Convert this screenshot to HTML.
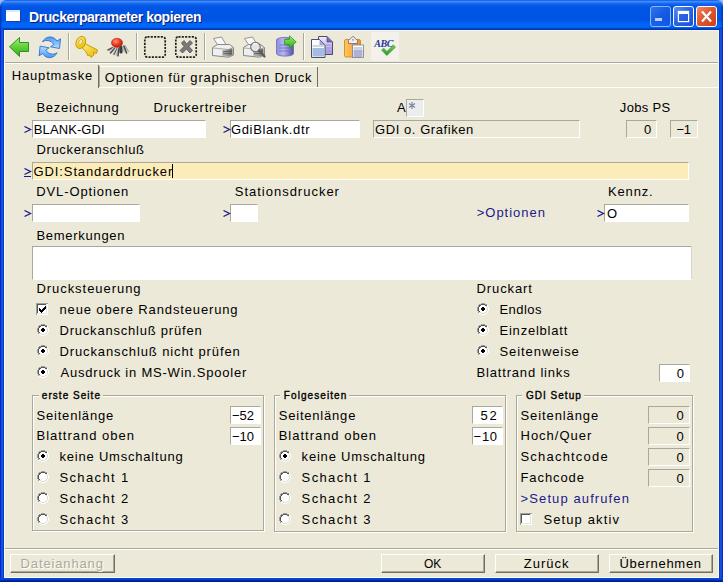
<!DOCTYPE html>
<html><head><meta charset="utf-8"><style>
html,body{margin:0;padding:0;width:723px;height:582px;overflow:hidden;background:#9db9eb}
body>div,body>svg{position:absolute}
div{position:absolute}
.t{white-space:pre;font-family:"Liberation Sans",sans-serif}
#title{left:0;top:0;width:723px;height:30px;border-radius:6px 6px 0 0;
background:linear-gradient(to bottom,#0a3dcc 0px,#3c8dff 1px,#3d8bff 2px,#1a6ff5 3px,#0a5ce8 5px,#0055e5 8px,#0054e3 20px,#0062f3 23px,#0067f9 27px,#0058e8 28px,#0036b0 29px,#0036b0 30px)}
#bl{left:0;top:29px;width:4px;height:553px;background:linear-gradient(to right,#0019cf 0,#0a35d8 1px,#1c66f0 2px,#0a3eb8 3px,#0a3eb8 4px)}
#br{left:719px;top:29px;width:4px;height:553px;background:linear-gradient(to left,#0019cf 0,#0a35d8 1px,#1c66f0 2px,#0a3eb8 3px,#0a3eb8 4px)}
#bb{left:0;top:578px;width:723px;height:4px;background:linear-gradient(to bottom,#0848d8 0,#0848d8 1px,#0040d0 1px,#0040d0 2px,#002cac 2px,#002cac 3px,#001a8c 3px)}
#client{left:4px;top:30px;width:715px;height:548px;background:#ECE9D8;box-sizing:border-box;border:1px solid #f4f6fb;border-bottom-color:#fff}
.tb{width:21px;height:21px;box-sizing:border-box;border:1px solid #fff;border-radius:3px;background:linear-gradient(135deg,#5d8ff5 0%,#2a63e6 45%,#1c50d8 100%)}
.tbx{background:linear-gradient(135deg,#f08a6a 0%,#e0582e 45%,#c8421c 100%)}
</style></head><body>
<div id="title"></div><div id="bl"></div><div id="br"></div><div id="bb"></div><div style="left:0px;top:6px;width:2px;height:23px;background:linear-gradient(to right,rgba(0,20,160,.55),rgba(0,20,160,.15))"></div><div style="left:721px;top:6px;width:2px;height:23px;background:linear-gradient(to left,rgba(0,20,160,.55),rgba(0,20,160,.15))"></div><div id="client"></div><div style="left:6px;top:10px;width:14px;height:11px;background:#fff;box-shadow:1px 1px 0 #1a3fa8"></div><div style="left:6px;top:10px;width:14px;height:2px;background:#dfe8fb"></div><div class="tb" style="left:650px;top:6px;opacity:.55"></div><div style="left:655px;top:18px;width:7px;height:3px;background:#bcd0f7"></div><div class="tb" style="left:673px;top:6px"></div><div style="left:678px;top:11px;width:11px;height:11px;border:1px solid #fff;border-top-width:3px;box-sizing:border-box;box-shadow:0 0 0 0.4px rgba(255,255,255,.5)"></div><div class="tb tbx" style="left:696px;top:6px"></div><svg style="position:absolute;left:696px;top:6px" width="21" height="21"><path d="M6 5.5 L15 15.5 M15 5.5 L6 15.5" stroke="#fff" stroke-width="2.2"/></svg><div style="left:5px;top:62px;width:713px;height:1px;background:#aca899"></div><div style="left:5px;top:63px;width:713px;height:1px;background:#fff"></div><div style="left:68px;top:33px;width:1px;height:27px;background:#aca899"></div><div style="left:69px;top:33px;width:1px;height:27px;background:#fff"></div><div style="left:136px;top:33px;width:1px;height:27px;background:#aca899"></div><div style="left:137px;top:33px;width:1px;height:27px;background:#fff"></div><div style="left:204px;top:33px;width:1px;height:27px;background:#aca899"></div><div style="left:205px;top:33px;width:1px;height:27px;background:#fff"></div><div style="left:303px;top:33px;width:1px;height:27px;background:#aca899"></div><div style="left:304px;top:33px;width:1px;height:27px;background:#fff"></div><div style="left:371px;top:32px;width:28px;height:29px;background:#f3f1e9"></div><svg style="position:absolute;left:0;top:0" width="410" height="62" viewBox="0 0 410 62">
<defs>
<linearGradient id="gg" x1="0" y1="0" x2="0" y2="1"><stop offset="0" stop-color="#a8f07a"/><stop offset="0.5" stop-color="#5fd03a"/><stop offset="1" stop-color="#38a820"/></linearGradient>
<linearGradient id="bg1" x1="0" y1="0" x2="1" y2="1"><stop offset="0" stop-color="#b8dcff"/><stop offset="1" stop-color="#2a7ee0"/></linearGradient>
<linearGradient id="bg2" x1="0" y1="0" x2="0" y2="1"><stop offset="0" stop-color="#4a94ec"/><stop offset="0.6" stop-color="#8cc4fa"/><stop offset="1" stop-color="#b8dcff"/></linearGradient>
<linearGradient id="kg" x1="0" y1="0" x2="1" y2="1"><stop offset="0" stop-color="#fff27a"/><stop offset="1" stop-color="#e8b400"/></linearGradient>
<radialGradient id="rb" cx="0.4" cy="0.35" r="0.7"><stop offset="0" stop-color="#ff9a7a"/><stop offset="0.5" stop-color="#f03a20"/><stop offset="1" stop-color="#b01808"/></radialGradient>
<linearGradient id="pg" x1="0" y1="0" x2="1" y2="1"><stop offset="0" stop-color="#ffffff"/><stop offset="1" stop-color="#9a9a9a"/></linearGradient>
<linearGradient id="dbg" x1="0" y1="0" x2="1" y2="0"><stop offset="0" stop-color="#8c8cd8"/><stop offset="0.4" stop-color="#b8b8f0"/><stop offset="1" stop-color="#5050a8"/></linearGradient>
<linearGradient id="psh" x1="0" y1="0" x2="1" y2="0"><stop offset="0" stop-color="#c8c8c8"/><stop offset="1" stop-color="#6a6a6a"/></linearGradient>
<linearGradient id="cpg" x1="0" y1="0" x2="0" y2="1"><stop offset="0" stop-color="#f0eefa"/><stop offset="0.5" stop-color="#c8bcec"/><stop offset="1" stop-color="#a898dc"/></linearGradient>
<linearGradient id="ckg" x1="0" y1="0" x2="0" y2="1"><stop offset="0" stop-color="#70d050"/><stop offset="1" stop-color="#2a9a20"/></linearGradient>
<linearGradient id="og" x1="0" y1="0" x2="1" y2="0"><stop offset="0" stop-color="#ffc860"/><stop offset="1" stop-color="#f09020"/></linearGradient>
</defs>
<!-- green back arrow -->
<path d="M9.5 46.8 L19.5 37.5 L19.5 42.5 L28.5 42.5 L28.5 51.5 L19.5 51.5 L19.5 56.5 Z" fill="url(#gg)" stroke="#2e8f22" stroke-width="1" stroke-linejoin="round"/>
<!-- refresh -->
<g>
<path d="M42.5 41.8 C45 36.5 53 34.5 57 41 L60.5 38.8 L59.5 48.5 L50.5 46.8 L53.8 44.5 C51 40 46 39.5 42.5 41.8 Z" fill="url(#bg2)" stroke="#2f70d6" stroke-width="0.9" stroke-linejoin="round"/>
</g>
<g transform="rotate(180 49.8 47.3)">
<path d="M42.5 41.8 C45 36.5 53 34.5 57 41 L60.5 38.8 L59.5 48.5 L50.5 46.8 L53.8 44.5 C51 40 46 39.5 42.5 41.8 Z" fill="url(#bg2)" stroke="#2f70d6" stroke-width="0.9" stroke-linejoin="round"/>
</g>
<!-- key -->
<g stroke="#c89400" stroke-width="0.9" stroke-linejoin="round">
<path d="M83 42.5 L97.5 50 L96.5 53.5 L93.5 52.2 L94 55 L91 57.5 L89.5 55 L88 56 L86 51.5 L84.5 50.5 L82 47.5 Z" fill="url(#kg)"/>
<ellipse cx="80.8" cy="42.5" rx="4.6" ry="6.2" transform="rotate(25 80.8 42.5)" fill="url(#kg)"/>
</g>
<ellipse cx="80.6" cy="42" rx="1.6" ry="3" transform="rotate(25 80.6 42)" fill="#f4ecc8" stroke="#d0a000" stroke-width="0.7"/>
<!-- red ball spider -->
<g stroke-linecap="round">
<path d="M108 50 L113 47.5" stroke="#555" stroke-width="1.6"/>
<path d="M110 52 L114 47.5" stroke="#c8c8c8" stroke-width="1.6"/>
<path d="M110.5 53 L115 48" stroke="#4a4a4a" stroke-width="1.4"/>
<path d="M113 54 L116 48" stroke="#d0d0d0" stroke-width="1.6"/>
<path d="M114 54.5 L117 48.5" stroke="#5a5a5a" stroke-width="1.2"/>
<path d="M116.5 55.5 L117.8 48.5" stroke="#bdbdbd" stroke-width="1.6"/>
<path d="M118 55.8 L119 48" stroke="#444" stroke-width="1.5"/>
<path d="M121 52 L121 47" stroke="#3c3c48" stroke-width="3.2"/>
<path d="M124 51.5 L123 46" stroke="#b8c0b8" stroke-width="1.5"/>
<path d="M126.5 53 L124 46" stroke="#4a4a4a" stroke-width="1.6"/>
<path d="M128.5 51.5 L125 45.5" stroke="#a8b0a8" stroke-width="1.4"/>
</g>
<ellipse cx="117" cy="42.8" rx="5.6" ry="4.6" fill="url(#rb)" stroke="#b02010" stroke-width="0.5"/>
<!-- dashed boxes -->
<rect x="144.8" y="36.8" width="20.4" height="20.3" rx="2.6" fill="none" stroke="#1e1e1e" stroke-width="1.7" stroke-dasharray="2.1 1.25"/>
<rect x="175.8" y="36.8" width="20.4" height="20.3" rx="2.6" fill="none" stroke="#1e1e1e" stroke-width="1.7" stroke-dasharray="2.1 1.25"/>
<path d="M181.5 43 L184 40.5 L186.5 44 L190 40.5 L192.5 43 L189 46.5 L192.5 50.5 L190 53 L186.5 49 L182.5 53 L180 50.5 L184 46.5 Z" fill="#7a7a7a" stroke="#505050" stroke-width="0.8" stroke-linejoin="round"/>
<!-- printer -->
<g>
<path d="M213.5 38.5 L221.5 37 L226 44.5 L218.5 46 Z" fill="#f8f8f8" stroke="#8a8a8a" stroke-width="0.9" stroke-linejoin="round"/>
<path d="M212.5 47.5 L217.5 44.5 L229.5 44.5 L233.5 47.5 L233.5 55 L228.5 57.2 L212.5 55.5 Z" fill="#efefef" stroke="#7a7a7a" stroke-width="0.9" stroke-linejoin="round"/>
<path d="M213 48 L228.5 49.5 L233 47.5" fill="none" stroke="#9a9a9a" stroke-width="0.8"/>
<path d="M222 50 L232.5 48.5 L232.5 55 L228.5 56.5 L222 56 Z" fill="url(#psh)"/>
<path d="M223 51.8 L232 51 M223 53.8 L232 53.2" stroke="#4a4a4a" stroke-width="0.8"/>
</g>
<!-- printer preview -->
<g transform="translate(31 0)">
<path d="M213.5 38.5 L221.5 37 L226 44.5 L218.5 46 Z" fill="#f8f8f8" stroke="#8a8a8a" stroke-width="0.9" stroke-linejoin="round"/>
<path d="M212.5 47.5 L217.5 44.5 L229.5 44.5 L233.5 47.5 L233.5 55 L228.5 57.2 L212.5 55.5 Z" fill="#efefef" stroke="#7a7a7a" stroke-width="0.9" stroke-linejoin="round"/>
<path d="M213 48 L228.5 49.5 L233 47.5" fill="none" stroke="#9a9a9a" stroke-width="0.8"/>
<path d="M222 50 L232.5 48.5 L232.5 55 L228.5 56.5 L222 56 Z" fill="url(#psh)"/>
<path d="M223 51.8 L232 51 M223 53.8 L232 53.2" stroke="#4a4a4a" stroke-width="0.8"/>
</g>
<circle cx="255.5" cy="47" r="4.8" fill="#e4e4e4" stroke="#6a6a6a" stroke-width="1.1"/>
<path d="M253 44.5 A3 3 0 0 1 257 44" stroke="#fff" stroke-width="1" fill="none"/>
<path d="M259 50.5 L264.5 56.5" stroke="#5a5a5a" stroke-width="2.3" stroke-linecap="round"/>
<!-- database w/ arrow -->
<path d="M276.5 40 C276.5 36.5 293.5 36.5 293.5 40 L293.5 53.5 C293.5 57 276.5 57 276.5 53.5 Z" fill="url(#dbg)" stroke="#6a6ab8" stroke-width="0.8"/>
<path d="M279 45 L290 45 M279 48 L290 48 M279 51 L290 51" stroke="#7070c0" stroke-width="0.8"/>
<path d="M284.5 39.5 L289.5 39.5 L289.5 35.8 L296.2 42 L289.5 48.2 L289.5 44.5 L284.5 44.5 Z" fill="url(#gg)" stroke="#2e9a20" stroke-width="0.8" stroke-linejoin="round"/>
<!-- copy -->
<path d="M318.5 36.5 L327 36.5 L332.5 42 L332.5 54.5 L318.5 54.5 Z" fill="url(#cpg)" stroke="#3c3c5a" stroke-width="0.9" stroke-linejoin="round"/>
<path d="M327 36.5 L327 42 L332.5 42" fill="#7a68c0" stroke="#3c3c5a" stroke-width="0.6"/>
<path d="M326 45 L331.5 45 M326 48 L331.5 48 M326 51 L331.5 51" stroke="#9a8ad8" stroke-width="0.9"/>
<path d="M311.5 39.5 L319.5 39.5 L325 45 L325 57.5 L311.5 57.5 Z" fill="#fafcff" stroke="#3c3c5a" stroke-width="0.9" stroke-linejoin="round"/>
<path d="M319.5 39.8 L319.5 45 L324.8 45 Z" fill="#9aaad8"/>
<rect x="312.5" y="45.5" width="12" height="1" fill="#a8b0c0"/>
<rect x="312.5" y="48" width="12" height="8.5" fill="#a4bce0"/>
<!-- paste -->
<rect x="344.5" y="39.5" width="16" height="17.5" rx="1.5" fill="url(#og)" stroke="#d08010" stroke-width="0.8"/>
<path d="M348.5 43.5 L348.5 40.5 L353 36.3 L357.5 40.5 L357.5 43.5 Z" fill="#f2eef0" stroke="#6a6a6a" stroke-width="0.8" stroke-linejoin="round"/><circle cx="353" cy="39.8" r="0.9" fill="#9a8a9a"/>
<rect x="352.5" y="45" width="11" height="12.5" fill="#ffffff" stroke="#7a7a8a" stroke-width="0.8"/>
<rect x="353.5" y="47.5" width="9" height="1" fill="#90a8c0"/><rect x="353.5" y="49.5" width="9" height="7.5" fill="#aeb0d4"/>
<!-- ABC check -->
<text x="374.2" y="47.3" font-family="Liberation Serif" font-style="italic" font-weight="bold" font-size="10" fill="#233a9a" letter-spacing="-0.4">ABC</text>
<path d="M381.5 50 L383.8 48.2 L386.8 51.5 L393.5 45 L395.5 47.2 L386.8 55.5 Z" fill="url(#ckg)" stroke="#2a8a20" stroke-width="0.5" stroke-linejoin="round"/>
</svg>
<div style="left:4px;top:63px;width:95px;height:26px;background:#ECE9D8;border-left:1px solid #fff;border-top:1px solid #fff;box-sizing:border-box"></div><div style="left:98px;top:65px;width:1px;height:23px;background:#716f64"></div><div style="left:99px;top:66px;width:1px;height:22px;background:#aca899"></div><div style="left:100px;top:66px;width:218px;height:22px;background:#ECE9D8;border-top:1px solid #fff;box-sizing:border-box"></div><div style="left:317px;top:67px;width:1px;height:20px;background:#716f64"></div><div style="left:99px;top:87px;width:620px;height:1px;background:#fff"></div><div style="left:32px;top:120px;width:174px;height:18px;background:#fff;border-top:1px solid #aca899;border-left:1px solid #aca899;border-bottom:1px solid #fff;border-right:1px solid #fff;box-sizing:border-box"></div><div style="left:230px;top:120px;width:130px;height:18px;background:#fff;border-top:1px solid #aca899;border-left:1px solid #aca899;border-bottom:1px solid #fff;border-right:1px solid #fff;box-sizing:border-box"></div><div style="left:373px;top:120px;width:207px;height:18px;background:#ECE9D8;border-top:1px solid #aca899;border-left:1px solid #aca899;border-bottom:1px solid #fff;border-right:1px solid #fff;box-sizing:border-box"></div><div style="left:406px;top:99px;width:18px;height:18px;background:#ecedee;border-top:1px solid #aca899;border-left:1px solid #aca899;border-bottom:1px solid #fff;border-right:1px solid #fff;box-sizing:border-box"></div><div style="left:626px;top:120px;width:31px;height:18px;background:#ECE9D8;border-top:1px solid #aca899;border-left:1px solid #aca899;border-bottom:1px solid #fff;border-right:1px solid #fff;box-sizing:border-box"></div><div style="left:670px;top:120px;width:28px;height:18px;background:#ECE9D8;border-top:1px solid #aca899;border-left:1px solid #aca899;border-bottom:1px solid #fff;border-right:1px solid #fff;box-sizing:border-box"></div><div style="left:32px;top:162px;width:657px;height:18px;background:#fcedb8;border-top:1px solid #aca899;border-left:1px solid #aca899;border-bottom:1px solid #fff;border-right:1px solid #fff;box-sizing:border-box"></div><div style="left:32px;top:204px;width:108px;height:18px;background:#fff;border-top:1px solid #aca899;border-left:1px solid #aca899;border-bottom:1px solid #fff;border-right:1px solid #fff;box-sizing:border-box"></div><div style="left:230px;top:204px;width:28px;height:18px;background:#fff;border-top:1px solid #aca899;border-left:1px solid #aca899;border-bottom:1px solid #fff;border-right:1px solid #fff;box-sizing:border-box"></div><div style="left:604px;top:204px;width:85px;height:18px;background:#fff;border-top:1px solid #aca899;border-left:1px solid #aca899;border-bottom:1px solid #fff;border-right:1px solid #fff;box-sizing:border-box"></div><div style="left:32px;top:246px;width:660px;height:34px;background:#fff;border-top:1px solid #aca899;border-left:1px solid #aca899;border-bottom:1px solid #fff;border-right:1px solid #fff;box-sizing:border-box"></div><div style="left:691px;top:246px;width:1px;height:33px;background:#d8d5c8"></div><div style="left:659px;top:364px;width:31px;height:18px;background:#fff;border-top:1px solid #aca899;border-left:1px solid #aca899;border-bottom:1px solid #fff;border-right:1px solid #fff;box-sizing:border-box"></div><div style="left:230px;top:406px;width:31px;height:18px;background:#fff;border-top:1px solid #aca899;border-left:1px solid #aca899;border-bottom:1px solid #fff;border-right:1px solid #fff;box-sizing:border-box"></div><div style="left:230px;top:427px;width:31px;height:18px;background:#fff;border-top:1px solid #aca899;border-left:1px solid #aca899;border-bottom:1px solid #fff;border-right:1px solid #fff;box-sizing:border-box"></div><div style="left:472px;top:406px;width:31px;height:18px;background:#fff;border-top:1px solid #aca899;border-left:1px solid #aca899;border-bottom:1px solid #fff;border-right:1px solid #fff;box-sizing:border-box"></div><div style="left:472px;top:427px;width:31px;height:18px;background:#fff;border-top:1px solid #aca899;border-left:1px solid #aca899;border-bottom:1px solid #fff;border-right:1px solid #fff;box-sizing:border-box"></div><div style="left:648px;top:406px;width:42px;height:18px;background:#ECE9D8;border-top:1px solid #aca899;border-left:1px solid #aca899;border-bottom:1px solid #fff;border-right:1px solid #fff;box-sizing:border-box"></div><div style="left:648px;top:427px;width:42px;height:18px;background:#ECE9D8;border-top:1px solid #aca899;border-left:1px solid #aca899;border-bottom:1px solid #fff;border-right:1px solid #fff;box-sizing:border-box"></div><div style="left:648px;top:448px;width:42px;height:18px;background:#ECE9D8;border-top:1px solid #aca899;border-left:1px solid #aca899;border-bottom:1px solid #fff;border-right:1px solid #fff;box-sizing:border-box"></div><div style="left:648px;top:469px;width:42px;height:18px;background:#ECE9D8;border-top:1px solid #aca899;border-left:1px solid #aca899;border-bottom:1px solid #fff;border-right:1px solid #fff;box-sizing:border-box"></div><div style="left:172px;top:164px;width:1px;height:14px;background:#000"></div><svg style="position:absolute;left:408px;top:101px" width="9" height="9"><g stroke="#7a7f92" stroke-width="1.1"><path d="M4 1 L4 8"/><path d="M1 2.5 L7 6.5"/><path d="M7 2.5 L1 6.5"/></g></svg><svg style="position:absolute;left:24px;top:126px" width="8" height="9"><path d="M0.5 0.5 L6.5 3.5 L0.5 6.5" stroke="#1c1a8a" stroke-width="1.3" fill="none"/></svg><svg style="position:absolute;left:223px;top:126px" width="8" height="9"><path d="M0.5 0.5 L6.5 3.5 L0.5 6.5" stroke="#1c1a8a" stroke-width="1.3" fill="none"/></svg><svg style="position:absolute;left:24px;top:168px" width="8" height="9"><path d="M0.5 0.5 L6.5 3.5 L0.5 6.5" stroke="#1c1a8a" stroke-width="1.3" fill="none"/><rect x="0" y="8" width="7" height="1" fill="#1c1a8a"/></svg><svg style="position:absolute;left:24px;top:210px" width="8" height="9"><path d="M0.5 0.5 L6.5 3.5 L0.5 6.5" stroke="#1c1a8a" stroke-width="1.3" fill="none"/></svg><svg style="position:absolute;left:223px;top:210px" width="8" height="9"><path d="M0.5 0.5 L6.5 3.5 L0.5 6.5" stroke="#1c1a8a" stroke-width="1.3" fill="none"/></svg><svg style="position:absolute;left:597px;top:210px" width="8" height="9"><path d="M0.5 0.5 L6.5 3.5 L0.5 6.5" stroke="#1c1a8a" stroke-width="1.3" fill="none"/></svg><div style="left:32px;top:395px;width:232px;height:136px;border:1px solid #aca899;box-sizing:border-box;box-shadow:inset 1px 1px 0 #fff, 1px 1px 0 #fff"></div><div style="left:274px;top:395px;width:232px;height:137px;border:1px solid #aca899;box-sizing:border-box;box-shadow:inset 1px 1px 0 #fff, 1px 1px 0 #fff"></div><div style="left:516px;top:395px;width:177px;height:137px;border:1px solid #aca899;box-sizing:border-box;box-shadow:inset 1px 1px 0 #fff, 1px 1px 0 #fff"></div><div style="left:39px;top:390px;width:64px;height:10px;background:#ECE9D8"></div><div style="left:280px;top:390px;width:69px;height:10px;background:#ECE9D8"></div><div style="left:522px;top:390px;width:62px;height:10px;background:#ECE9D8"></div><svg style="position:absolute;left:36px;top:303px" width="12" height="12" shape-rendering="crispEdges"><rect x="0" y="0" width="12" height="12" fill="#fff"/><rect x="0" y="0" width="12" height="1" fill="#a0a0a0"/><rect x="0" y="0" width="1" height="12" fill="#a0a0a0"/><rect x="1" y="1" width="10" height="1" fill="#555"/><rect x="1" y="1" width="1" height="10" fill="#555"/><rect x="1" y="10" width="10" height="1" fill="#e8e6dc"/><rect x="10" y="1" width="1" height="10" fill="#e8e6dc"/><rect x="9" y="3" width="1" height="1" fill="#000"/><rect x="8" y="4" width="1" height="1" fill="#000"/><rect x="9" y="4" width="1" height="1" fill="#000"/><rect x="3" y="5" width="1" height="1" fill="#000"/><rect x="7" y="5" width="1" height="1" fill="#000"/><rect x="8" y="5" width="1" height="1" fill="#000"/><rect x="9" y="5" width="1" height="1" fill="#000"/><rect x="3" y="6" width="1" height="1" fill="#000"/><rect x="4" y="6" width="1" height="1" fill="#000"/><rect x="6" y="6" width="1" height="1" fill="#000"/><rect x="7" y="6" width="1" height="1" fill="#000"/><rect x="8" y="6" width="1" height="1" fill="#000"/><rect x="3" y="7" width="1" height="1" fill="#000"/><rect x="4" y="7" width="1" height="1" fill="#000"/><rect x="5" y="7" width="1" height="1" fill="#000"/><rect x="6" y="7" width="1" height="1" fill="#000"/><rect x="7" y="7" width="1" height="1" fill="#000"/><rect x="4" y="8" width="1" height="1" fill="#000"/><rect x="5" y="8" width="1" height="1" fill="#000"/><rect x="6" y="8" width="1" height="1" fill="#000"/><rect x="5" y="9" width="1" height="1" fill="#000"/></svg><svg style="position:absolute;left:520px;top:513px" width="12" height="12" shape-rendering="crispEdges"><rect x="0" y="0" width="12" height="12" fill="#fff"/><rect x="0" y="0" width="12" height="1" fill="#a0a0a0"/><rect x="0" y="0" width="1" height="12" fill="#a0a0a0"/><rect x="1" y="1" width="10" height="1" fill="#555"/><rect x="1" y="1" width="1" height="10" fill="#555"/><rect x="1" y="10" width="10" height="1" fill="#e8e6dc"/><rect x="10" y="1" width="1" height="10" fill="#e8e6dc"/></svg><svg style="position:absolute;left:37px;top:324px" width="12" height="12" shape-rendering="crispEdges"><circle cx="6" cy="6" r="4.6" fill="#fff"/><rect x="4" y="0" width="1" height="1" fill="#a0a0a0"/><rect x="5" y="0" width="1" height="1" fill="#a0a0a0"/><rect x="6" y="0" width="1" height="1" fill="#a0a0a0"/><rect x="7" y="0" width="1" height="1" fill="#a0a0a0"/><rect x="2" y="1" width="1" height="1" fill="#a0a0a0"/><rect x="3" y="1" width="1" height="1" fill="#a0a0a0"/><rect x="8" y="1" width="1" height="1" fill="#a0a0a0"/><rect x="9" y="1" width="1" height="1" fill="#a0a0a0"/><rect x="1" y="2" width="1" height="1" fill="#a0a0a0"/><rect x="1" y="3" width="1" height="1" fill="#a0a0a0"/><rect x="0" y="4" width="1" height="1" fill="#a0a0a0"/><rect x="0" y="5" width="1" height="1" fill="#a0a0a0"/><rect x="0" y="6" width="1" height="1" fill="#a0a0a0"/><rect x="0" y="7" width="1" height="1" fill="#a0a0a0"/><rect x="1" y="8" width="1" height="1" fill="#a0a0a0"/><rect x="1" y="9" width="1" height="1" fill="#a0a0a0"/><rect x="4" y="1" width="1" height="1" fill="#555"/><rect x="5" y="1" width="1" height="1" fill="#555"/><rect x="6" y="1" width="1" height="1" fill="#555"/><rect x="7" y="1" width="1" height="1" fill="#555"/><rect x="2" y="2" width="1" height="1" fill="#555"/><rect x="3" y="2" width="1" height="1" fill="#555"/><rect x="8" y="2" width="1" height="1" fill="#555"/><rect x="9" y="2" width="1" height="1" fill="#555"/><rect x="2" y="3" width="1" height="1" fill="#555"/><rect x="1" y="4" width="1" height="1" fill="#555"/><rect x="1" y="5" width="1" height="1" fill="#555"/><rect x="1" y="6" width="1" height="1" fill="#555"/><rect x="1" y="7" width="1" height="1" fill="#555"/><rect x="2" y="8" width="1" height="1" fill="#555"/><rect x="10" y="2" width="1" height="1" fill="#fff"/><rect x="10" y="3" width="1" height="1" fill="#fff"/><rect x="11" y="4" width="1" height="1" fill="#fff"/><rect x="11" y="5" width="1" height="1" fill="#fff"/><rect x="11" y="6" width="1" height="1" fill="#fff"/><rect x="11" y="7" width="1" height="1" fill="#fff"/><rect x="10" y="8" width="1" height="1" fill="#fff"/><rect x="10" y="9" width="1" height="1" fill="#fff"/><rect x="2" y="10" width="1" height="1" fill="#fff"/><rect x="3" y="10" width="1" height="1" fill="#fff"/><rect x="8" y="10" width="1" height="1" fill="#fff"/><rect x="9" y="10" width="1" height="1" fill="#fff"/><rect x="4" y="11" width="1" height="1" fill="#fff"/><rect x="5" y="11" width="1" height="1" fill="#fff"/><rect x="6" y="11" width="1" height="1" fill="#fff"/><rect x="7" y="11" width="1" height="1" fill="#fff"/><rect x="9" y="3" width="1" height="1" fill="#e0ddd0"/><rect x="10" y="4" width="1" height="1" fill="#e0ddd0"/><rect x="10" y="5" width="1" height="1" fill="#e0ddd0"/><rect x="10" y="6" width="1" height="1" fill="#e0ddd0"/><rect x="10" y="7" width="1" height="1" fill="#e0ddd0"/><rect x="9" y="8" width="1" height="1" fill="#e0ddd0"/><rect x="2" y="9" width="1" height="1" fill="#e0ddd0"/><rect x="3" y="9" width="1" height="1" fill="#e0ddd0"/><rect x="8" y="9" width="1" height="1" fill="#e0ddd0"/><rect x="9" y="9" width="1" height="1" fill="#e0ddd0"/><rect x="4" y="10" width="1" height="1" fill="#e0ddd0"/><rect x="5" y="10" width="1" height="1" fill="#e0ddd0"/><rect x="6" y="10" width="1" height="1" fill="#e0ddd0"/><rect x="7" y="10" width="1" height="1" fill="#e0ddd0"/><rect x="5" y="4" width="2" height="4" fill="#000"/><rect x="4" y="5" width="4" height="2" fill="#000"/></svg><svg style="position:absolute;left:37px;top:345px" width="12" height="12" shape-rendering="crispEdges"><circle cx="6" cy="6" r="4.6" fill="#fff"/><rect x="4" y="0" width="1" height="1" fill="#a0a0a0"/><rect x="5" y="0" width="1" height="1" fill="#a0a0a0"/><rect x="6" y="0" width="1" height="1" fill="#a0a0a0"/><rect x="7" y="0" width="1" height="1" fill="#a0a0a0"/><rect x="2" y="1" width="1" height="1" fill="#a0a0a0"/><rect x="3" y="1" width="1" height="1" fill="#a0a0a0"/><rect x="8" y="1" width="1" height="1" fill="#a0a0a0"/><rect x="9" y="1" width="1" height="1" fill="#a0a0a0"/><rect x="1" y="2" width="1" height="1" fill="#a0a0a0"/><rect x="1" y="3" width="1" height="1" fill="#a0a0a0"/><rect x="0" y="4" width="1" height="1" fill="#a0a0a0"/><rect x="0" y="5" width="1" height="1" fill="#a0a0a0"/><rect x="0" y="6" width="1" height="1" fill="#a0a0a0"/><rect x="0" y="7" width="1" height="1" fill="#a0a0a0"/><rect x="1" y="8" width="1" height="1" fill="#a0a0a0"/><rect x="1" y="9" width="1" height="1" fill="#a0a0a0"/><rect x="4" y="1" width="1" height="1" fill="#555"/><rect x="5" y="1" width="1" height="1" fill="#555"/><rect x="6" y="1" width="1" height="1" fill="#555"/><rect x="7" y="1" width="1" height="1" fill="#555"/><rect x="2" y="2" width="1" height="1" fill="#555"/><rect x="3" y="2" width="1" height="1" fill="#555"/><rect x="8" y="2" width="1" height="1" fill="#555"/><rect x="9" y="2" width="1" height="1" fill="#555"/><rect x="2" y="3" width="1" height="1" fill="#555"/><rect x="1" y="4" width="1" height="1" fill="#555"/><rect x="1" y="5" width="1" height="1" fill="#555"/><rect x="1" y="6" width="1" height="1" fill="#555"/><rect x="1" y="7" width="1" height="1" fill="#555"/><rect x="2" y="8" width="1" height="1" fill="#555"/><rect x="10" y="2" width="1" height="1" fill="#fff"/><rect x="10" y="3" width="1" height="1" fill="#fff"/><rect x="11" y="4" width="1" height="1" fill="#fff"/><rect x="11" y="5" width="1" height="1" fill="#fff"/><rect x="11" y="6" width="1" height="1" fill="#fff"/><rect x="11" y="7" width="1" height="1" fill="#fff"/><rect x="10" y="8" width="1" height="1" fill="#fff"/><rect x="10" y="9" width="1" height="1" fill="#fff"/><rect x="2" y="10" width="1" height="1" fill="#fff"/><rect x="3" y="10" width="1" height="1" fill="#fff"/><rect x="8" y="10" width="1" height="1" fill="#fff"/><rect x="9" y="10" width="1" height="1" fill="#fff"/><rect x="4" y="11" width="1" height="1" fill="#fff"/><rect x="5" y="11" width="1" height="1" fill="#fff"/><rect x="6" y="11" width="1" height="1" fill="#fff"/><rect x="7" y="11" width="1" height="1" fill="#fff"/><rect x="9" y="3" width="1" height="1" fill="#e0ddd0"/><rect x="10" y="4" width="1" height="1" fill="#e0ddd0"/><rect x="10" y="5" width="1" height="1" fill="#e0ddd0"/><rect x="10" y="6" width="1" height="1" fill="#e0ddd0"/><rect x="10" y="7" width="1" height="1" fill="#e0ddd0"/><rect x="9" y="8" width="1" height="1" fill="#e0ddd0"/><rect x="2" y="9" width="1" height="1" fill="#e0ddd0"/><rect x="3" y="9" width="1" height="1" fill="#e0ddd0"/><rect x="8" y="9" width="1" height="1" fill="#e0ddd0"/><rect x="9" y="9" width="1" height="1" fill="#e0ddd0"/><rect x="4" y="10" width="1" height="1" fill="#e0ddd0"/><rect x="5" y="10" width="1" height="1" fill="#e0ddd0"/><rect x="6" y="10" width="1" height="1" fill="#e0ddd0"/><rect x="7" y="10" width="1" height="1" fill="#e0ddd0"/><rect x="5" y="4" width="2" height="4" fill="#000"/><rect x="4" y="5" width="4" height="2" fill="#000"/></svg><svg style="position:absolute;left:37px;top:366px" width="12" height="12" shape-rendering="crispEdges"><circle cx="6" cy="6" r="4.6" fill="#fff"/><rect x="4" y="0" width="1" height="1" fill="#a0a0a0"/><rect x="5" y="0" width="1" height="1" fill="#a0a0a0"/><rect x="6" y="0" width="1" height="1" fill="#a0a0a0"/><rect x="7" y="0" width="1" height="1" fill="#a0a0a0"/><rect x="2" y="1" width="1" height="1" fill="#a0a0a0"/><rect x="3" y="1" width="1" height="1" fill="#a0a0a0"/><rect x="8" y="1" width="1" height="1" fill="#a0a0a0"/><rect x="9" y="1" width="1" height="1" fill="#a0a0a0"/><rect x="1" y="2" width="1" height="1" fill="#a0a0a0"/><rect x="1" y="3" width="1" height="1" fill="#a0a0a0"/><rect x="0" y="4" width="1" height="1" fill="#a0a0a0"/><rect x="0" y="5" width="1" height="1" fill="#a0a0a0"/><rect x="0" y="6" width="1" height="1" fill="#a0a0a0"/><rect x="0" y="7" width="1" height="1" fill="#a0a0a0"/><rect x="1" y="8" width="1" height="1" fill="#a0a0a0"/><rect x="1" y="9" width="1" height="1" fill="#a0a0a0"/><rect x="4" y="1" width="1" height="1" fill="#555"/><rect x="5" y="1" width="1" height="1" fill="#555"/><rect x="6" y="1" width="1" height="1" fill="#555"/><rect x="7" y="1" width="1" height="1" fill="#555"/><rect x="2" y="2" width="1" height="1" fill="#555"/><rect x="3" y="2" width="1" height="1" fill="#555"/><rect x="8" y="2" width="1" height="1" fill="#555"/><rect x="9" y="2" width="1" height="1" fill="#555"/><rect x="2" y="3" width="1" height="1" fill="#555"/><rect x="1" y="4" width="1" height="1" fill="#555"/><rect x="1" y="5" width="1" height="1" fill="#555"/><rect x="1" y="6" width="1" height="1" fill="#555"/><rect x="1" y="7" width="1" height="1" fill="#555"/><rect x="2" y="8" width="1" height="1" fill="#555"/><rect x="10" y="2" width="1" height="1" fill="#fff"/><rect x="10" y="3" width="1" height="1" fill="#fff"/><rect x="11" y="4" width="1" height="1" fill="#fff"/><rect x="11" y="5" width="1" height="1" fill="#fff"/><rect x="11" y="6" width="1" height="1" fill="#fff"/><rect x="11" y="7" width="1" height="1" fill="#fff"/><rect x="10" y="8" width="1" height="1" fill="#fff"/><rect x="10" y="9" width="1" height="1" fill="#fff"/><rect x="2" y="10" width="1" height="1" fill="#fff"/><rect x="3" y="10" width="1" height="1" fill="#fff"/><rect x="8" y="10" width="1" height="1" fill="#fff"/><rect x="9" y="10" width="1" height="1" fill="#fff"/><rect x="4" y="11" width="1" height="1" fill="#fff"/><rect x="5" y="11" width="1" height="1" fill="#fff"/><rect x="6" y="11" width="1" height="1" fill="#fff"/><rect x="7" y="11" width="1" height="1" fill="#fff"/><rect x="9" y="3" width="1" height="1" fill="#e0ddd0"/><rect x="10" y="4" width="1" height="1" fill="#e0ddd0"/><rect x="10" y="5" width="1" height="1" fill="#e0ddd0"/><rect x="10" y="6" width="1" height="1" fill="#e0ddd0"/><rect x="10" y="7" width="1" height="1" fill="#e0ddd0"/><rect x="9" y="8" width="1" height="1" fill="#e0ddd0"/><rect x="2" y="9" width="1" height="1" fill="#e0ddd0"/><rect x="3" y="9" width="1" height="1" fill="#e0ddd0"/><rect x="8" y="9" width="1" height="1" fill="#e0ddd0"/><rect x="9" y="9" width="1" height="1" fill="#e0ddd0"/><rect x="4" y="10" width="1" height="1" fill="#e0ddd0"/><rect x="5" y="10" width="1" height="1" fill="#e0ddd0"/><rect x="6" y="10" width="1" height="1" fill="#e0ddd0"/><rect x="7" y="10" width="1" height="1" fill="#e0ddd0"/><rect x="5" y="4" width="2" height="4" fill="#000"/><rect x="4" y="5" width="4" height="2" fill="#000"/></svg><svg style="position:absolute;left:477px;top:303px" width="12" height="12" shape-rendering="crispEdges"><circle cx="6" cy="6" r="4.6" fill="#fff"/><rect x="4" y="0" width="1" height="1" fill="#a0a0a0"/><rect x="5" y="0" width="1" height="1" fill="#a0a0a0"/><rect x="6" y="0" width="1" height="1" fill="#a0a0a0"/><rect x="7" y="0" width="1" height="1" fill="#a0a0a0"/><rect x="2" y="1" width="1" height="1" fill="#a0a0a0"/><rect x="3" y="1" width="1" height="1" fill="#a0a0a0"/><rect x="8" y="1" width="1" height="1" fill="#a0a0a0"/><rect x="9" y="1" width="1" height="1" fill="#a0a0a0"/><rect x="1" y="2" width="1" height="1" fill="#a0a0a0"/><rect x="1" y="3" width="1" height="1" fill="#a0a0a0"/><rect x="0" y="4" width="1" height="1" fill="#a0a0a0"/><rect x="0" y="5" width="1" height="1" fill="#a0a0a0"/><rect x="0" y="6" width="1" height="1" fill="#a0a0a0"/><rect x="0" y="7" width="1" height="1" fill="#a0a0a0"/><rect x="1" y="8" width="1" height="1" fill="#a0a0a0"/><rect x="1" y="9" width="1" height="1" fill="#a0a0a0"/><rect x="4" y="1" width="1" height="1" fill="#555"/><rect x="5" y="1" width="1" height="1" fill="#555"/><rect x="6" y="1" width="1" height="1" fill="#555"/><rect x="7" y="1" width="1" height="1" fill="#555"/><rect x="2" y="2" width="1" height="1" fill="#555"/><rect x="3" y="2" width="1" height="1" fill="#555"/><rect x="8" y="2" width="1" height="1" fill="#555"/><rect x="9" y="2" width="1" height="1" fill="#555"/><rect x="2" y="3" width="1" height="1" fill="#555"/><rect x="1" y="4" width="1" height="1" fill="#555"/><rect x="1" y="5" width="1" height="1" fill="#555"/><rect x="1" y="6" width="1" height="1" fill="#555"/><rect x="1" y="7" width="1" height="1" fill="#555"/><rect x="2" y="8" width="1" height="1" fill="#555"/><rect x="10" y="2" width="1" height="1" fill="#fff"/><rect x="10" y="3" width="1" height="1" fill="#fff"/><rect x="11" y="4" width="1" height="1" fill="#fff"/><rect x="11" y="5" width="1" height="1" fill="#fff"/><rect x="11" y="6" width="1" height="1" fill="#fff"/><rect x="11" y="7" width="1" height="1" fill="#fff"/><rect x="10" y="8" width="1" height="1" fill="#fff"/><rect x="10" y="9" width="1" height="1" fill="#fff"/><rect x="2" y="10" width="1" height="1" fill="#fff"/><rect x="3" y="10" width="1" height="1" fill="#fff"/><rect x="8" y="10" width="1" height="1" fill="#fff"/><rect x="9" y="10" width="1" height="1" fill="#fff"/><rect x="4" y="11" width="1" height="1" fill="#fff"/><rect x="5" y="11" width="1" height="1" fill="#fff"/><rect x="6" y="11" width="1" height="1" fill="#fff"/><rect x="7" y="11" width="1" height="1" fill="#fff"/><rect x="9" y="3" width="1" height="1" fill="#e0ddd0"/><rect x="10" y="4" width="1" height="1" fill="#e0ddd0"/><rect x="10" y="5" width="1" height="1" fill="#e0ddd0"/><rect x="10" y="6" width="1" height="1" fill="#e0ddd0"/><rect x="10" y="7" width="1" height="1" fill="#e0ddd0"/><rect x="9" y="8" width="1" height="1" fill="#e0ddd0"/><rect x="2" y="9" width="1" height="1" fill="#e0ddd0"/><rect x="3" y="9" width="1" height="1" fill="#e0ddd0"/><rect x="8" y="9" width="1" height="1" fill="#e0ddd0"/><rect x="9" y="9" width="1" height="1" fill="#e0ddd0"/><rect x="4" y="10" width="1" height="1" fill="#e0ddd0"/><rect x="5" y="10" width="1" height="1" fill="#e0ddd0"/><rect x="6" y="10" width="1" height="1" fill="#e0ddd0"/><rect x="7" y="10" width="1" height="1" fill="#e0ddd0"/><rect x="5" y="4" width="2" height="4" fill="#000"/><rect x="4" y="5" width="4" height="2" fill="#000"/></svg><svg style="position:absolute;left:477px;top:324px" width="12" height="12" shape-rendering="crispEdges"><circle cx="6" cy="6" r="4.6" fill="#fff"/><rect x="4" y="0" width="1" height="1" fill="#a0a0a0"/><rect x="5" y="0" width="1" height="1" fill="#a0a0a0"/><rect x="6" y="0" width="1" height="1" fill="#a0a0a0"/><rect x="7" y="0" width="1" height="1" fill="#a0a0a0"/><rect x="2" y="1" width="1" height="1" fill="#a0a0a0"/><rect x="3" y="1" width="1" height="1" fill="#a0a0a0"/><rect x="8" y="1" width="1" height="1" fill="#a0a0a0"/><rect x="9" y="1" width="1" height="1" fill="#a0a0a0"/><rect x="1" y="2" width="1" height="1" fill="#a0a0a0"/><rect x="1" y="3" width="1" height="1" fill="#a0a0a0"/><rect x="0" y="4" width="1" height="1" fill="#a0a0a0"/><rect x="0" y="5" width="1" height="1" fill="#a0a0a0"/><rect x="0" y="6" width="1" height="1" fill="#a0a0a0"/><rect x="0" y="7" width="1" height="1" fill="#a0a0a0"/><rect x="1" y="8" width="1" height="1" fill="#a0a0a0"/><rect x="1" y="9" width="1" height="1" fill="#a0a0a0"/><rect x="4" y="1" width="1" height="1" fill="#555"/><rect x="5" y="1" width="1" height="1" fill="#555"/><rect x="6" y="1" width="1" height="1" fill="#555"/><rect x="7" y="1" width="1" height="1" fill="#555"/><rect x="2" y="2" width="1" height="1" fill="#555"/><rect x="3" y="2" width="1" height="1" fill="#555"/><rect x="8" y="2" width="1" height="1" fill="#555"/><rect x="9" y="2" width="1" height="1" fill="#555"/><rect x="2" y="3" width="1" height="1" fill="#555"/><rect x="1" y="4" width="1" height="1" fill="#555"/><rect x="1" y="5" width="1" height="1" fill="#555"/><rect x="1" y="6" width="1" height="1" fill="#555"/><rect x="1" y="7" width="1" height="1" fill="#555"/><rect x="2" y="8" width="1" height="1" fill="#555"/><rect x="10" y="2" width="1" height="1" fill="#fff"/><rect x="10" y="3" width="1" height="1" fill="#fff"/><rect x="11" y="4" width="1" height="1" fill="#fff"/><rect x="11" y="5" width="1" height="1" fill="#fff"/><rect x="11" y="6" width="1" height="1" fill="#fff"/><rect x="11" y="7" width="1" height="1" fill="#fff"/><rect x="10" y="8" width="1" height="1" fill="#fff"/><rect x="10" y="9" width="1" height="1" fill="#fff"/><rect x="2" y="10" width="1" height="1" fill="#fff"/><rect x="3" y="10" width="1" height="1" fill="#fff"/><rect x="8" y="10" width="1" height="1" fill="#fff"/><rect x="9" y="10" width="1" height="1" fill="#fff"/><rect x="4" y="11" width="1" height="1" fill="#fff"/><rect x="5" y="11" width="1" height="1" fill="#fff"/><rect x="6" y="11" width="1" height="1" fill="#fff"/><rect x="7" y="11" width="1" height="1" fill="#fff"/><rect x="9" y="3" width="1" height="1" fill="#e0ddd0"/><rect x="10" y="4" width="1" height="1" fill="#e0ddd0"/><rect x="10" y="5" width="1" height="1" fill="#e0ddd0"/><rect x="10" y="6" width="1" height="1" fill="#e0ddd0"/><rect x="10" y="7" width="1" height="1" fill="#e0ddd0"/><rect x="9" y="8" width="1" height="1" fill="#e0ddd0"/><rect x="2" y="9" width="1" height="1" fill="#e0ddd0"/><rect x="3" y="9" width="1" height="1" fill="#e0ddd0"/><rect x="8" y="9" width="1" height="1" fill="#e0ddd0"/><rect x="9" y="9" width="1" height="1" fill="#e0ddd0"/><rect x="4" y="10" width="1" height="1" fill="#e0ddd0"/><rect x="5" y="10" width="1" height="1" fill="#e0ddd0"/><rect x="6" y="10" width="1" height="1" fill="#e0ddd0"/><rect x="7" y="10" width="1" height="1" fill="#e0ddd0"/><rect x="5" y="4" width="2" height="4" fill="#000"/><rect x="4" y="5" width="4" height="2" fill="#000"/></svg><svg style="position:absolute;left:477px;top:345px" width="12" height="12" shape-rendering="crispEdges"><circle cx="6" cy="6" r="4.6" fill="#fff"/><rect x="4" y="0" width="1" height="1" fill="#a0a0a0"/><rect x="5" y="0" width="1" height="1" fill="#a0a0a0"/><rect x="6" y="0" width="1" height="1" fill="#a0a0a0"/><rect x="7" y="0" width="1" height="1" fill="#a0a0a0"/><rect x="2" y="1" width="1" height="1" fill="#a0a0a0"/><rect x="3" y="1" width="1" height="1" fill="#a0a0a0"/><rect x="8" y="1" width="1" height="1" fill="#a0a0a0"/><rect x="9" y="1" width="1" height="1" fill="#a0a0a0"/><rect x="1" y="2" width="1" height="1" fill="#a0a0a0"/><rect x="1" y="3" width="1" height="1" fill="#a0a0a0"/><rect x="0" y="4" width="1" height="1" fill="#a0a0a0"/><rect x="0" y="5" width="1" height="1" fill="#a0a0a0"/><rect x="0" y="6" width="1" height="1" fill="#a0a0a0"/><rect x="0" y="7" width="1" height="1" fill="#a0a0a0"/><rect x="1" y="8" width="1" height="1" fill="#a0a0a0"/><rect x="1" y="9" width="1" height="1" fill="#a0a0a0"/><rect x="4" y="1" width="1" height="1" fill="#555"/><rect x="5" y="1" width="1" height="1" fill="#555"/><rect x="6" y="1" width="1" height="1" fill="#555"/><rect x="7" y="1" width="1" height="1" fill="#555"/><rect x="2" y="2" width="1" height="1" fill="#555"/><rect x="3" y="2" width="1" height="1" fill="#555"/><rect x="8" y="2" width="1" height="1" fill="#555"/><rect x="9" y="2" width="1" height="1" fill="#555"/><rect x="2" y="3" width="1" height="1" fill="#555"/><rect x="1" y="4" width="1" height="1" fill="#555"/><rect x="1" y="5" width="1" height="1" fill="#555"/><rect x="1" y="6" width="1" height="1" fill="#555"/><rect x="1" y="7" width="1" height="1" fill="#555"/><rect x="2" y="8" width="1" height="1" fill="#555"/><rect x="10" y="2" width="1" height="1" fill="#fff"/><rect x="10" y="3" width="1" height="1" fill="#fff"/><rect x="11" y="4" width="1" height="1" fill="#fff"/><rect x="11" y="5" width="1" height="1" fill="#fff"/><rect x="11" y="6" width="1" height="1" fill="#fff"/><rect x="11" y="7" width="1" height="1" fill="#fff"/><rect x="10" y="8" width="1" height="1" fill="#fff"/><rect x="10" y="9" width="1" height="1" fill="#fff"/><rect x="2" y="10" width="1" height="1" fill="#fff"/><rect x="3" y="10" width="1" height="1" fill="#fff"/><rect x="8" y="10" width="1" height="1" fill="#fff"/><rect x="9" y="10" width="1" height="1" fill="#fff"/><rect x="4" y="11" width="1" height="1" fill="#fff"/><rect x="5" y="11" width="1" height="1" fill="#fff"/><rect x="6" y="11" width="1" height="1" fill="#fff"/><rect x="7" y="11" width="1" height="1" fill="#fff"/><rect x="9" y="3" width="1" height="1" fill="#e0ddd0"/><rect x="10" y="4" width="1" height="1" fill="#e0ddd0"/><rect x="10" y="5" width="1" height="1" fill="#e0ddd0"/><rect x="10" y="6" width="1" height="1" fill="#e0ddd0"/><rect x="10" y="7" width="1" height="1" fill="#e0ddd0"/><rect x="9" y="8" width="1" height="1" fill="#e0ddd0"/><rect x="2" y="9" width="1" height="1" fill="#e0ddd0"/><rect x="3" y="9" width="1" height="1" fill="#e0ddd0"/><rect x="8" y="9" width="1" height="1" fill="#e0ddd0"/><rect x="9" y="9" width="1" height="1" fill="#e0ddd0"/><rect x="4" y="10" width="1" height="1" fill="#e0ddd0"/><rect x="5" y="10" width="1" height="1" fill="#e0ddd0"/><rect x="6" y="10" width="1" height="1" fill="#e0ddd0"/><rect x="7" y="10" width="1" height="1" fill="#e0ddd0"/><rect x="5" y="4" width="2" height="4" fill="#000"/><rect x="4" y="5" width="4" height="2" fill="#000"/></svg><svg style="position:absolute;left:37px;top:450px" width="12" height="12" shape-rendering="crispEdges"><circle cx="6" cy="6" r="4.6" fill="#fff"/><rect x="4" y="0" width="1" height="1" fill="#a0a0a0"/><rect x="5" y="0" width="1" height="1" fill="#a0a0a0"/><rect x="6" y="0" width="1" height="1" fill="#a0a0a0"/><rect x="7" y="0" width="1" height="1" fill="#a0a0a0"/><rect x="2" y="1" width="1" height="1" fill="#a0a0a0"/><rect x="3" y="1" width="1" height="1" fill="#a0a0a0"/><rect x="8" y="1" width="1" height="1" fill="#a0a0a0"/><rect x="9" y="1" width="1" height="1" fill="#a0a0a0"/><rect x="1" y="2" width="1" height="1" fill="#a0a0a0"/><rect x="1" y="3" width="1" height="1" fill="#a0a0a0"/><rect x="0" y="4" width="1" height="1" fill="#a0a0a0"/><rect x="0" y="5" width="1" height="1" fill="#a0a0a0"/><rect x="0" y="6" width="1" height="1" fill="#a0a0a0"/><rect x="0" y="7" width="1" height="1" fill="#a0a0a0"/><rect x="1" y="8" width="1" height="1" fill="#a0a0a0"/><rect x="1" y="9" width="1" height="1" fill="#a0a0a0"/><rect x="4" y="1" width="1" height="1" fill="#555"/><rect x="5" y="1" width="1" height="1" fill="#555"/><rect x="6" y="1" width="1" height="1" fill="#555"/><rect x="7" y="1" width="1" height="1" fill="#555"/><rect x="2" y="2" width="1" height="1" fill="#555"/><rect x="3" y="2" width="1" height="1" fill="#555"/><rect x="8" y="2" width="1" height="1" fill="#555"/><rect x="9" y="2" width="1" height="1" fill="#555"/><rect x="2" y="3" width="1" height="1" fill="#555"/><rect x="1" y="4" width="1" height="1" fill="#555"/><rect x="1" y="5" width="1" height="1" fill="#555"/><rect x="1" y="6" width="1" height="1" fill="#555"/><rect x="1" y="7" width="1" height="1" fill="#555"/><rect x="2" y="8" width="1" height="1" fill="#555"/><rect x="10" y="2" width="1" height="1" fill="#fff"/><rect x="10" y="3" width="1" height="1" fill="#fff"/><rect x="11" y="4" width="1" height="1" fill="#fff"/><rect x="11" y="5" width="1" height="1" fill="#fff"/><rect x="11" y="6" width="1" height="1" fill="#fff"/><rect x="11" y="7" width="1" height="1" fill="#fff"/><rect x="10" y="8" width="1" height="1" fill="#fff"/><rect x="10" y="9" width="1" height="1" fill="#fff"/><rect x="2" y="10" width="1" height="1" fill="#fff"/><rect x="3" y="10" width="1" height="1" fill="#fff"/><rect x="8" y="10" width="1" height="1" fill="#fff"/><rect x="9" y="10" width="1" height="1" fill="#fff"/><rect x="4" y="11" width="1" height="1" fill="#fff"/><rect x="5" y="11" width="1" height="1" fill="#fff"/><rect x="6" y="11" width="1" height="1" fill="#fff"/><rect x="7" y="11" width="1" height="1" fill="#fff"/><rect x="9" y="3" width="1" height="1" fill="#e0ddd0"/><rect x="10" y="4" width="1" height="1" fill="#e0ddd0"/><rect x="10" y="5" width="1" height="1" fill="#e0ddd0"/><rect x="10" y="6" width="1" height="1" fill="#e0ddd0"/><rect x="10" y="7" width="1" height="1" fill="#e0ddd0"/><rect x="9" y="8" width="1" height="1" fill="#e0ddd0"/><rect x="2" y="9" width="1" height="1" fill="#e0ddd0"/><rect x="3" y="9" width="1" height="1" fill="#e0ddd0"/><rect x="8" y="9" width="1" height="1" fill="#e0ddd0"/><rect x="9" y="9" width="1" height="1" fill="#e0ddd0"/><rect x="4" y="10" width="1" height="1" fill="#e0ddd0"/><rect x="5" y="10" width="1" height="1" fill="#e0ddd0"/><rect x="6" y="10" width="1" height="1" fill="#e0ddd0"/><rect x="7" y="10" width="1" height="1" fill="#e0ddd0"/><rect x="5" y="4" width="2" height="4" fill="#000"/><rect x="4" y="5" width="4" height="2" fill="#000"/></svg><svg style="position:absolute;left:279px;top:450px" width="12" height="12" shape-rendering="crispEdges"><circle cx="6" cy="6" r="4.6" fill="#fff"/><rect x="4" y="0" width="1" height="1" fill="#a0a0a0"/><rect x="5" y="0" width="1" height="1" fill="#a0a0a0"/><rect x="6" y="0" width="1" height="1" fill="#a0a0a0"/><rect x="7" y="0" width="1" height="1" fill="#a0a0a0"/><rect x="2" y="1" width="1" height="1" fill="#a0a0a0"/><rect x="3" y="1" width="1" height="1" fill="#a0a0a0"/><rect x="8" y="1" width="1" height="1" fill="#a0a0a0"/><rect x="9" y="1" width="1" height="1" fill="#a0a0a0"/><rect x="1" y="2" width="1" height="1" fill="#a0a0a0"/><rect x="1" y="3" width="1" height="1" fill="#a0a0a0"/><rect x="0" y="4" width="1" height="1" fill="#a0a0a0"/><rect x="0" y="5" width="1" height="1" fill="#a0a0a0"/><rect x="0" y="6" width="1" height="1" fill="#a0a0a0"/><rect x="0" y="7" width="1" height="1" fill="#a0a0a0"/><rect x="1" y="8" width="1" height="1" fill="#a0a0a0"/><rect x="1" y="9" width="1" height="1" fill="#a0a0a0"/><rect x="4" y="1" width="1" height="1" fill="#555"/><rect x="5" y="1" width="1" height="1" fill="#555"/><rect x="6" y="1" width="1" height="1" fill="#555"/><rect x="7" y="1" width="1" height="1" fill="#555"/><rect x="2" y="2" width="1" height="1" fill="#555"/><rect x="3" y="2" width="1" height="1" fill="#555"/><rect x="8" y="2" width="1" height="1" fill="#555"/><rect x="9" y="2" width="1" height="1" fill="#555"/><rect x="2" y="3" width="1" height="1" fill="#555"/><rect x="1" y="4" width="1" height="1" fill="#555"/><rect x="1" y="5" width="1" height="1" fill="#555"/><rect x="1" y="6" width="1" height="1" fill="#555"/><rect x="1" y="7" width="1" height="1" fill="#555"/><rect x="2" y="8" width="1" height="1" fill="#555"/><rect x="10" y="2" width="1" height="1" fill="#fff"/><rect x="10" y="3" width="1" height="1" fill="#fff"/><rect x="11" y="4" width="1" height="1" fill="#fff"/><rect x="11" y="5" width="1" height="1" fill="#fff"/><rect x="11" y="6" width="1" height="1" fill="#fff"/><rect x="11" y="7" width="1" height="1" fill="#fff"/><rect x="10" y="8" width="1" height="1" fill="#fff"/><rect x="10" y="9" width="1" height="1" fill="#fff"/><rect x="2" y="10" width="1" height="1" fill="#fff"/><rect x="3" y="10" width="1" height="1" fill="#fff"/><rect x="8" y="10" width="1" height="1" fill="#fff"/><rect x="9" y="10" width="1" height="1" fill="#fff"/><rect x="4" y="11" width="1" height="1" fill="#fff"/><rect x="5" y="11" width="1" height="1" fill="#fff"/><rect x="6" y="11" width="1" height="1" fill="#fff"/><rect x="7" y="11" width="1" height="1" fill="#fff"/><rect x="9" y="3" width="1" height="1" fill="#e0ddd0"/><rect x="10" y="4" width="1" height="1" fill="#e0ddd0"/><rect x="10" y="5" width="1" height="1" fill="#e0ddd0"/><rect x="10" y="6" width="1" height="1" fill="#e0ddd0"/><rect x="10" y="7" width="1" height="1" fill="#e0ddd0"/><rect x="9" y="8" width="1" height="1" fill="#e0ddd0"/><rect x="2" y="9" width="1" height="1" fill="#e0ddd0"/><rect x="3" y="9" width="1" height="1" fill="#e0ddd0"/><rect x="8" y="9" width="1" height="1" fill="#e0ddd0"/><rect x="9" y="9" width="1" height="1" fill="#e0ddd0"/><rect x="4" y="10" width="1" height="1" fill="#e0ddd0"/><rect x="5" y="10" width="1" height="1" fill="#e0ddd0"/><rect x="6" y="10" width="1" height="1" fill="#e0ddd0"/><rect x="7" y="10" width="1" height="1" fill="#e0ddd0"/><rect x="5" y="4" width="2" height="4" fill="#000"/><rect x="4" y="5" width="4" height="2" fill="#000"/></svg><svg style="position:absolute;left:37px;top:471px" width="12" height="12" shape-rendering="crispEdges"><circle cx="6" cy="6" r="4.6" fill="#fff"/><rect x="4" y="0" width="1" height="1" fill="#a0a0a0"/><rect x="5" y="0" width="1" height="1" fill="#a0a0a0"/><rect x="6" y="0" width="1" height="1" fill="#a0a0a0"/><rect x="7" y="0" width="1" height="1" fill="#a0a0a0"/><rect x="2" y="1" width="1" height="1" fill="#a0a0a0"/><rect x="3" y="1" width="1" height="1" fill="#a0a0a0"/><rect x="8" y="1" width="1" height="1" fill="#a0a0a0"/><rect x="9" y="1" width="1" height="1" fill="#a0a0a0"/><rect x="1" y="2" width="1" height="1" fill="#a0a0a0"/><rect x="1" y="3" width="1" height="1" fill="#a0a0a0"/><rect x="0" y="4" width="1" height="1" fill="#a0a0a0"/><rect x="0" y="5" width="1" height="1" fill="#a0a0a0"/><rect x="0" y="6" width="1" height="1" fill="#a0a0a0"/><rect x="0" y="7" width="1" height="1" fill="#a0a0a0"/><rect x="1" y="8" width="1" height="1" fill="#a0a0a0"/><rect x="1" y="9" width="1" height="1" fill="#a0a0a0"/><rect x="4" y="1" width="1" height="1" fill="#555"/><rect x="5" y="1" width="1" height="1" fill="#555"/><rect x="6" y="1" width="1" height="1" fill="#555"/><rect x="7" y="1" width="1" height="1" fill="#555"/><rect x="2" y="2" width="1" height="1" fill="#555"/><rect x="3" y="2" width="1" height="1" fill="#555"/><rect x="8" y="2" width="1" height="1" fill="#555"/><rect x="9" y="2" width="1" height="1" fill="#555"/><rect x="2" y="3" width="1" height="1" fill="#555"/><rect x="1" y="4" width="1" height="1" fill="#555"/><rect x="1" y="5" width="1" height="1" fill="#555"/><rect x="1" y="6" width="1" height="1" fill="#555"/><rect x="1" y="7" width="1" height="1" fill="#555"/><rect x="2" y="8" width="1" height="1" fill="#555"/><rect x="10" y="2" width="1" height="1" fill="#fff"/><rect x="10" y="3" width="1" height="1" fill="#fff"/><rect x="11" y="4" width="1" height="1" fill="#fff"/><rect x="11" y="5" width="1" height="1" fill="#fff"/><rect x="11" y="6" width="1" height="1" fill="#fff"/><rect x="11" y="7" width="1" height="1" fill="#fff"/><rect x="10" y="8" width="1" height="1" fill="#fff"/><rect x="10" y="9" width="1" height="1" fill="#fff"/><rect x="2" y="10" width="1" height="1" fill="#fff"/><rect x="3" y="10" width="1" height="1" fill="#fff"/><rect x="8" y="10" width="1" height="1" fill="#fff"/><rect x="9" y="10" width="1" height="1" fill="#fff"/><rect x="4" y="11" width="1" height="1" fill="#fff"/><rect x="5" y="11" width="1" height="1" fill="#fff"/><rect x="6" y="11" width="1" height="1" fill="#fff"/><rect x="7" y="11" width="1" height="1" fill="#fff"/><rect x="9" y="3" width="1" height="1" fill="#e0ddd0"/><rect x="10" y="4" width="1" height="1" fill="#e0ddd0"/><rect x="10" y="5" width="1" height="1" fill="#e0ddd0"/><rect x="10" y="6" width="1" height="1" fill="#e0ddd0"/><rect x="10" y="7" width="1" height="1" fill="#e0ddd0"/><rect x="9" y="8" width="1" height="1" fill="#e0ddd0"/><rect x="2" y="9" width="1" height="1" fill="#e0ddd0"/><rect x="3" y="9" width="1" height="1" fill="#e0ddd0"/><rect x="8" y="9" width="1" height="1" fill="#e0ddd0"/><rect x="9" y="9" width="1" height="1" fill="#e0ddd0"/><rect x="4" y="10" width="1" height="1" fill="#e0ddd0"/><rect x="5" y="10" width="1" height="1" fill="#e0ddd0"/><rect x="6" y="10" width="1" height="1" fill="#e0ddd0"/><rect x="7" y="10" width="1" height="1" fill="#e0ddd0"/></svg><svg style="position:absolute;left:279px;top:471px" width="12" height="12" shape-rendering="crispEdges"><circle cx="6" cy="6" r="4.6" fill="#fff"/><rect x="4" y="0" width="1" height="1" fill="#a0a0a0"/><rect x="5" y="0" width="1" height="1" fill="#a0a0a0"/><rect x="6" y="0" width="1" height="1" fill="#a0a0a0"/><rect x="7" y="0" width="1" height="1" fill="#a0a0a0"/><rect x="2" y="1" width="1" height="1" fill="#a0a0a0"/><rect x="3" y="1" width="1" height="1" fill="#a0a0a0"/><rect x="8" y="1" width="1" height="1" fill="#a0a0a0"/><rect x="9" y="1" width="1" height="1" fill="#a0a0a0"/><rect x="1" y="2" width="1" height="1" fill="#a0a0a0"/><rect x="1" y="3" width="1" height="1" fill="#a0a0a0"/><rect x="0" y="4" width="1" height="1" fill="#a0a0a0"/><rect x="0" y="5" width="1" height="1" fill="#a0a0a0"/><rect x="0" y="6" width="1" height="1" fill="#a0a0a0"/><rect x="0" y="7" width="1" height="1" fill="#a0a0a0"/><rect x="1" y="8" width="1" height="1" fill="#a0a0a0"/><rect x="1" y="9" width="1" height="1" fill="#a0a0a0"/><rect x="4" y="1" width="1" height="1" fill="#555"/><rect x="5" y="1" width="1" height="1" fill="#555"/><rect x="6" y="1" width="1" height="1" fill="#555"/><rect x="7" y="1" width="1" height="1" fill="#555"/><rect x="2" y="2" width="1" height="1" fill="#555"/><rect x="3" y="2" width="1" height="1" fill="#555"/><rect x="8" y="2" width="1" height="1" fill="#555"/><rect x="9" y="2" width="1" height="1" fill="#555"/><rect x="2" y="3" width="1" height="1" fill="#555"/><rect x="1" y="4" width="1" height="1" fill="#555"/><rect x="1" y="5" width="1" height="1" fill="#555"/><rect x="1" y="6" width="1" height="1" fill="#555"/><rect x="1" y="7" width="1" height="1" fill="#555"/><rect x="2" y="8" width="1" height="1" fill="#555"/><rect x="10" y="2" width="1" height="1" fill="#fff"/><rect x="10" y="3" width="1" height="1" fill="#fff"/><rect x="11" y="4" width="1" height="1" fill="#fff"/><rect x="11" y="5" width="1" height="1" fill="#fff"/><rect x="11" y="6" width="1" height="1" fill="#fff"/><rect x="11" y="7" width="1" height="1" fill="#fff"/><rect x="10" y="8" width="1" height="1" fill="#fff"/><rect x="10" y="9" width="1" height="1" fill="#fff"/><rect x="2" y="10" width="1" height="1" fill="#fff"/><rect x="3" y="10" width="1" height="1" fill="#fff"/><rect x="8" y="10" width="1" height="1" fill="#fff"/><rect x="9" y="10" width="1" height="1" fill="#fff"/><rect x="4" y="11" width="1" height="1" fill="#fff"/><rect x="5" y="11" width="1" height="1" fill="#fff"/><rect x="6" y="11" width="1" height="1" fill="#fff"/><rect x="7" y="11" width="1" height="1" fill="#fff"/><rect x="9" y="3" width="1" height="1" fill="#e0ddd0"/><rect x="10" y="4" width="1" height="1" fill="#e0ddd0"/><rect x="10" y="5" width="1" height="1" fill="#e0ddd0"/><rect x="10" y="6" width="1" height="1" fill="#e0ddd0"/><rect x="10" y="7" width="1" height="1" fill="#e0ddd0"/><rect x="9" y="8" width="1" height="1" fill="#e0ddd0"/><rect x="2" y="9" width="1" height="1" fill="#e0ddd0"/><rect x="3" y="9" width="1" height="1" fill="#e0ddd0"/><rect x="8" y="9" width="1" height="1" fill="#e0ddd0"/><rect x="9" y="9" width="1" height="1" fill="#e0ddd0"/><rect x="4" y="10" width="1" height="1" fill="#e0ddd0"/><rect x="5" y="10" width="1" height="1" fill="#e0ddd0"/><rect x="6" y="10" width="1" height="1" fill="#e0ddd0"/><rect x="7" y="10" width="1" height="1" fill="#e0ddd0"/></svg><svg style="position:absolute;left:37px;top:492px" width="12" height="12" shape-rendering="crispEdges"><circle cx="6" cy="6" r="4.6" fill="#fff"/><rect x="4" y="0" width="1" height="1" fill="#a0a0a0"/><rect x="5" y="0" width="1" height="1" fill="#a0a0a0"/><rect x="6" y="0" width="1" height="1" fill="#a0a0a0"/><rect x="7" y="0" width="1" height="1" fill="#a0a0a0"/><rect x="2" y="1" width="1" height="1" fill="#a0a0a0"/><rect x="3" y="1" width="1" height="1" fill="#a0a0a0"/><rect x="8" y="1" width="1" height="1" fill="#a0a0a0"/><rect x="9" y="1" width="1" height="1" fill="#a0a0a0"/><rect x="1" y="2" width="1" height="1" fill="#a0a0a0"/><rect x="1" y="3" width="1" height="1" fill="#a0a0a0"/><rect x="0" y="4" width="1" height="1" fill="#a0a0a0"/><rect x="0" y="5" width="1" height="1" fill="#a0a0a0"/><rect x="0" y="6" width="1" height="1" fill="#a0a0a0"/><rect x="0" y="7" width="1" height="1" fill="#a0a0a0"/><rect x="1" y="8" width="1" height="1" fill="#a0a0a0"/><rect x="1" y="9" width="1" height="1" fill="#a0a0a0"/><rect x="4" y="1" width="1" height="1" fill="#555"/><rect x="5" y="1" width="1" height="1" fill="#555"/><rect x="6" y="1" width="1" height="1" fill="#555"/><rect x="7" y="1" width="1" height="1" fill="#555"/><rect x="2" y="2" width="1" height="1" fill="#555"/><rect x="3" y="2" width="1" height="1" fill="#555"/><rect x="8" y="2" width="1" height="1" fill="#555"/><rect x="9" y="2" width="1" height="1" fill="#555"/><rect x="2" y="3" width="1" height="1" fill="#555"/><rect x="1" y="4" width="1" height="1" fill="#555"/><rect x="1" y="5" width="1" height="1" fill="#555"/><rect x="1" y="6" width="1" height="1" fill="#555"/><rect x="1" y="7" width="1" height="1" fill="#555"/><rect x="2" y="8" width="1" height="1" fill="#555"/><rect x="10" y="2" width="1" height="1" fill="#fff"/><rect x="10" y="3" width="1" height="1" fill="#fff"/><rect x="11" y="4" width="1" height="1" fill="#fff"/><rect x="11" y="5" width="1" height="1" fill="#fff"/><rect x="11" y="6" width="1" height="1" fill="#fff"/><rect x="11" y="7" width="1" height="1" fill="#fff"/><rect x="10" y="8" width="1" height="1" fill="#fff"/><rect x="10" y="9" width="1" height="1" fill="#fff"/><rect x="2" y="10" width="1" height="1" fill="#fff"/><rect x="3" y="10" width="1" height="1" fill="#fff"/><rect x="8" y="10" width="1" height="1" fill="#fff"/><rect x="9" y="10" width="1" height="1" fill="#fff"/><rect x="4" y="11" width="1" height="1" fill="#fff"/><rect x="5" y="11" width="1" height="1" fill="#fff"/><rect x="6" y="11" width="1" height="1" fill="#fff"/><rect x="7" y="11" width="1" height="1" fill="#fff"/><rect x="9" y="3" width="1" height="1" fill="#e0ddd0"/><rect x="10" y="4" width="1" height="1" fill="#e0ddd0"/><rect x="10" y="5" width="1" height="1" fill="#e0ddd0"/><rect x="10" y="6" width="1" height="1" fill="#e0ddd0"/><rect x="10" y="7" width="1" height="1" fill="#e0ddd0"/><rect x="9" y="8" width="1" height="1" fill="#e0ddd0"/><rect x="2" y="9" width="1" height="1" fill="#e0ddd0"/><rect x="3" y="9" width="1" height="1" fill="#e0ddd0"/><rect x="8" y="9" width="1" height="1" fill="#e0ddd0"/><rect x="9" y="9" width="1" height="1" fill="#e0ddd0"/><rect x="4" y="10" width="1" height="1" fill="#e0ddd0"/><rect x="5" y="10" width="1" height="1" fill="#e0ddd0"/><rect x="6" y="10" width="1" height="1" fill="#e0ddd0"/><rect x="7" y="10" width="1" height="1" fill="#e0ddd0"/></svg><svg style="position:absolute;left:279px;top:492px" width="12" height="12" shape-rendering="crispEdges"><circle cx="6" cy="6" r="4.6" fill="#fff"/><rect x="4" y="0" width="1" height="1" fill="#a0a0a0"/><rect x="5" y="0" width="1" height="1" fill="#a0a0a0"/><rect x="6" y="0" width="1" height="1" fill="#a0a0a0"/><rect x="7" y="0" width="1" height="1" fill="#a0a0a0"/><rect x="2" y="1" width="1" height="1" fill="#a0a0a0"/><rect x="3" y="1" width="1" height="1" fill="#a0a0a0"/><rect x="8" y="1" width="1" height="1" fill="#a0a0a0"/><rect x="9" y="1" width="1" height="1" fill="#a0a0a0"/><rect x="1" y="2" width="1" height="1" fill="#a0a0a0"/><rect x="1" y="3" width="1" height="1" fill="#a0a0a0"/><rect x="0" y="4" width="1" height="1" fill="#a0a0a0"/><rect x="0" y="5" width="1" height="1" fill="#a0a0a0"/><rect x="0" y="6" width="1" height="1" fill="#a0a0a0"/><rect x="0" y="7" width="1" height="1" fill="#a0a0a0"/><rect x="1" y="8" width="1" height="1" fill="#a0a0a0"/><rect x="1" y="9" width="1" height="1" fill="#a0a0a0"/><rect x="4" y="1" width="1" height="1" fill="#555"/><rect x="5" y="1" width="1" height="1" fill="#555"/><rect x="6" y="1" width="1" height="1" fill="#555"/><rect x="7" y="1" width="1" height="1" fill="#555"/><rect x="2" y="2" width="1" height="1" fill="#555"/><rect x="3" y="2" width="1" height="1" fill="#555"/><rect x="8" y="2" width="1" height="1" fill="#555"/><rect x="9" y="2" width="1" height="1" fill="#555"/><rect x="2" y="3" width="1" height="1" fill="#555"/><rect x="1" y="4" width="1" height="1" fill="#555"/><rect x="1" y="5" width="1" height="1" fill="#555"/><rect x="1" y="6" width="1" height="1" fill="#555"/><rect x="1" y="7" width="1" height="1" fill="#555"/><rect x="2" y="8" width="1" height="1" fill="#555"/><rect x="10" y="2" width="1" height="1" fill="#fff"/><rect x="10" y="3" width="1" height="1" fill="#fff"/><rect x="11" y="4" width="1" height="1" fill="#fff"/><rect x="11" y="5" width="1" height="1" fill="#fff"/><rect x="11" y="6" width="1" height="1" fill="#fff"/><rect x="11" y="7" width="1" height="1" fill="#fff"/><rect x="10" y="8" width="1" height="1" fill="#fff"/><rect x="10" y="9" width="1" height="1" fill="#fff"/><rect x="2" y="10" width="1" height="1" fill="#fff"/><rect x="3" y="10" width="1" height="1" fill="#fff"/><rect x="8" y="10" width="1" height="1" fill="#fff"/><rect x="9" y="10" width="1" height="1" fill="#fff"/><rect x="4" y="11" width="1" height="1" fill="#fff"/><rect x="5" y="11" width="1" height="1" fill="#fff"/><rect x="6" y="11" width="1" height="1" fill="#fff"/><rect x="7" y="11" width="1" height="1" fill="#fff"/><rect x="9" y="3" width="1" height="1" fill="#e0ddd0"/><rect x="10" y="4" width="1" height="1" fill="#e0ddd0"/><rect x="10" y="5" width="1" height="1" fill="#e0ddd0"/><rect x="10" y="6" width="1" height="1" fill="#e0ddd0"/><rect x="10" y="7" width="1" height="1" fill="#e0ddd0"/><rect x="9" y="8" width="1" height="1" fill="#e0ddd0"/><rect x="2" y="9" width="1" height="1" fill="#e0ddd0"/><rect x="3" y="9" width="1" height="1" fill="#e0ddd0"/><rect x="8" y="9" width="1" height="1" fill="#e0ddd0"/><rect x="9" y="9" width="1" height="1" fill="#e0ddd0"/><rect x="4" y="10" width="1" height="1" fill="#e0ddd0"/><rect x="5" y="10" width="1" height="1" fill="#e0ddd0"/><rect x="6" y="10" width="1" height="1" fill="#e0ddd0"/><rect x="7" y="10" width="1" height="1" fill="#e0ddd0"/></svg><svg style="position:absolute;left:37px;top:513px" width="12" height="12" shape-rendering="crispEdges"><circle cx="6" cy="6" r="4.6" fill="#fff"/><rect x="4" y="0" width="1" height="1" fill="#a0a0a0"/><rect x="5" y="0" width="1" height="1" fill="#a0a0a0"/><rect x="6" y="0" width="1" height="1" fill="#a0a0a0"/><rect x="7" y="0" width="1" height="1" fill="#a0a0a0"/><rect x="2" y="1" width="1" height="1" fill="#a0a0a0"/><rect x="3" y="1" width="1" height="1" fill="#a0a0a0"/><rect x="8" y="1" width="1" height="1" fill="#a0a0a0"/><rect x="9" y="1" width="1" height="1" fill="#a0a0a0"/><rect x="1" y="2" width="1" height="1" fill="#a0a0a0"/><rect x="1" y="3" width="1" height="1" fill="#a0a0a0"/><rect x="0" y="4" width="1" height="1" fill="#a0a0a0"/><rect x="0" y="5" width="1" height="1" fill="#a0a0a0"/><rect x="0" y="6" width="1" height="1" fill="#a0a0a0"/><rect x="0" y="7" width="1" height="1" fill="#a0a0a0"/><rect x="1" y="8" width="1" height="1" fill="#a0a0a0"/><rect x="1" y="9" width="1" height="1" fill="#a0a0a0"/><rect x="4" y="1" width="1" height="1" fill="#555"/><rect x="5" y="1" width="1" height="1" fill="#555"/><rect x="6" y="1" width="1" height="1" fill="#555"/><rect x="7" y="1" width="1" height="1" fill="#555"/><rect x="2" y="2" width="1" height="1" fill="#555"/><rect x="3" y="2" width="1" height="1" fill="#555"/><rect x="8" y="2" width="1" height="1" fill="#555"/><rect x="9" y="2" width="1" height="1" fill="#555"/><rect x="2" y="3" width="1" height="1" fill="#555"/><rect x="1" y="4" width="1" height="1" fill="#555"/><rect x="1" y="5" width="1" height="1" fill="#555"/><rect x="1" y="6" width="1" height="1" fill="#555"/><rect x="1" y="7" width="1" height="1" fill="#555"/><rect x="2" y="8" width="1" height="1" fill="#555"/><rect x="10" y="2" width="1" height="1" fill="#fff"/><rect x="10" y="3" width="1" height="1" fill="#fff"/><rect x="11" y="4" width="1" height="1" fill="#fff"/><rect x="11" y="5" width="1" height="1" fill="#fff"/><rect x="11" y="6" width="1" height="1" fill="#fff"/><rect x="11" y="7" width="1" height="1" fill="#fff"/><rect x="10" y="8" width="1" height="1" fill="#fff"/><rect x="10" y="9" width="1" height="1" fill="#fff"/><rect x="2" y="10" width="1" height="1" fill="#fff"/><rect x="3" y="10" width="1" height="1" fill="#fff"/><rect x="8" y="10" width="1" height="1" fill="#fff"/><rect x="9" y="10" width="1" height="1" fill="#fff"/><rect x="4" y="11" width="1" height="1" fill="#fff"/><rect x="5" y="11" width="1" height="1" fill="#fff"/><rect x="6" y="11" width="1" height="1" fill="#fff"/><rect x="7" y="11" width="1" height="1" fill="#fff"/><rect x="9" y="3" width="1" height="1" fill="#e0ddd0"/><rect x="10" y="4" width="1" height="1" fill="#e0ddd0"/><rect x="10" y="5" width="1" height="1" fill="#e0ddd0"/><rect x="10" y="6" width="1" height="1" fill="#e0ddd0"/><rect x="10" y="7" width="1" height="1" fill="#e0ddd0"/><rect x="9" y="8" width="1" height="1" fill="#e0ddd0"/><rect x="2" y="9" width="1" height="1" fill="#e0ddd0"/><rect x="3" y="9" width="1" height="1" fill="#e0ddd0"/><rect x="8" y="9" width="1" height="1" fill="#e0ddd0"/><rect x="9" y="9" width="1" height="1" fill="#e0ddd0"/><rect x="4" y="10" width="1" height="1" fill="#e0ddd0"/><rect x="5" y="10" width="1" height="1" fill="#e0ddd0"/><rect x="6" y="10" width="1" height="1" fill="#e0ddd0"/><rect x="7" y="10" width="1" height="1" fill="#e0ddd0"/></svg><svg style="position:absolute;left:279px;top:513px" width="12" height="12" shape-rendering="crispEdges"><circle cx="6" cy="6" r="4.6" fill="#fff"/><rect x="4" y="0" width="1" height="1" fill="#a0a0a0"/><rect x="5" y="0" width="1" height="1" fill="#a0a0a0"/><rect x="6" y="0" width="1" height="1" fill="#a0a0a0"/><rect x="7" y="0" width="1" height="1" fill="#a0a0a0"/><rect x="2" y="1" width="1" height="1" fill="#a0a0a0"/><rect x="3" y="1" width="1" height="1" fill="#a0a0a0"/><rect x="8" y="1" width="1" height="1" fill="#a0a0a0"/><rect x="9" y="1" width="1" height="1" fill="#a0a0a0"/><rect x="1" y="2" width="1" height="1" fill="#a0a0a0"/><rect x="1" y="3" width="1" height="1" fill="#a0a0a0"/><rect x="0" y="4" width="1" height="1" fill="#a0a0a0"/><rect x="0" y="5" width="1" height="1" fill="#a0a0a0"/><rect x="0" y="6" width="1" height="1" fill="#a0a0a0"/><rect x="0" y="7" width="1" height="1" fill="#a0a0a0"/><rect x="1" y="8" width="1" height="1" fill="#a0a0a0"/><rect x="1" y="9" width="1" height="1" fill="#a0a0a0"/><rect x="4" y="1" width="1" height="1" fill="#555"/><rect x="5" y="1" width="1" height="1" fill="#555"/><rect x="6" y="1" width="1" height="1" fill="#555"/><rect x="7" y="1" width="1" height="1" fill="#555"/><rect x="2" y="2" width="1" height="1" fill="#555"/><rect x="3" y="2" width="1" height="1" fill="#555"/><rect x="8" y="2" width="1" height="1" fill="#555"/><rect x="9" y="2" width="1" height="1" fill="#555"/><rect x="2" y="3" width="1" height="1" fill="#555"/><rect x="1" y="4" width="1" height="1" fill="#555"/><rect x="1" y="5" width="1" height="1" fill="#555"/><rect x="1" y="6" width="1" height="1" fill="#555"/><rect x="1" y="7" width="1" height="1" fill="#555"/><rect x="2" y="8" width="1" height="1" fill="#555"/><rect x="10" y="2" width="1" height="1" fill="#fff"/><rect x="10" y="3" width="1" height="1" fill="#fff"/><rect x="11" y="4" width="1" height="1" fill="#fff"/><rect x="11" y="5" width="1" height="1" fill="#fff"/><rect x="11" y="6" width="1" height="1" fill="#fff"/><rect x="11" y="7" width="1" height="1" fill="#fff"/><rect x="10" y="8" width="1" height="1" fill="#fff"/><rect x="10" y="9" width="1" height="1" fill="#fff"/><rect x="2" y="10" width="1" height="1" fill="#fff"/><rect x="3" y="10" width="1" height="1" fill="#fff"/><rect x="8" y="10" width="1" height="1" fill="#fff"/><rect x="9" y="10" width="1" height="1" fill="#fff"/><rect x="4" y="11" width="1" height="1" fill="#fff"/><rect x="5" y="11" width="1" height="1" fill="#fff"/><rect x="6" y="11" width="1" height="1" fill="#fff"/><rect x="7" y="11" width="1" height="1" fill="#fff"/><rect x="9" y="3" width="1" height="1" fill="#e0ddd0"/><rect x="10" y="4" width="1" height="1" fill="#e0ddd0"/><rect x="10" y="5" width="1" height="1" fill="#e0ddd0"/><rect x="10" y="6" width="1" height="1" fill="#e0ddd0"/><rect x="10" y="7" width="1" height="1" fill="#e0ddd0"/><rect x="9" y="8" width="1" height="1" fill="#e0ddd0"/><rect x="2" y="9" width="1" height="1" fill="#e0ddd0"/><rect x="3" y="9" width="1" height="1" fill="#e0ddd0"/><rect x="8" y="9" width="1" height="1" fill="#e0ddd0"/><rect x="9" y="9" width="1" height="1" fill="#e0ddd0"/><rect x="4" y="10" width="1" height="1" fill="#e0ddd0"/><rect x="5" y="10" width="1" height="1" fill="#e0ddd0"/><rect x="6" y="10" width="1" height="1" fill="#e0ddd0"/><rect x="7" y="10" width="1" height="1" fill="#e0ddd0"/></svg><div style="left:5px;top:548px;width:713px;height:1px;background:#aca899"></div><div style="left:5px;top:549px;width:713px;height:1px;background:#fff"></div><div style="left:10px;top:554px;width:105px;height:19px;background:#ECE9D8;border-top:1px solid #fff;border-left:1px solid #fff;border-right:1px solid #716f64;border-bottom:1px solid #716f64;box-sizing:border-box;box-shadow:inset -1px -1px 0 #aca899"></div><div style="left:381px;top:554px;width:104px;height:19px;background:#ECE9D8;border-top:1px solid #fff;border-left:1px solid #fff;border-right:1px solid #716f64;border-bottom:1px solid #716f64;box-sizing:border-box;box-shadow:inset -1px -1px 0 #aca899"></div><div style="left:495px;top:554px;width:104px;height:19px;background:#ECE9D8;border-top:1px solid #fff;border-left:1px solid #fff;border-right:1px solid #716f64;border-bottom:1px solid #716f64;box-sizing:border-box;box-shadow:inset -1px -1px 0 #aca899"></div><div style="left:609px;top:554px;width:104px;height:19px;background:#ECE9D8;border-top:1px solid #fff;border-left:1px solid #fff;border-right:1px solid #716f64;border-bottom:1px solid #716f64;box-sizing:border-box;box-shadow:inset -1px -1px 0 #aca899"></div><div class="t" style="left:29.0px;top:10px;font-size:14px;line-height:14px;font-weight:bold;color:#fff;letter-spacing:-0.433px;text-shadow:1px 1px 0 #0a1a70;">Druckerparameter kopieren</div><div class="t" style="left:11.7px;top:69px;font-size:13px;line-height:13px;color:#000;letter-spacing:0.844px;">Hauptmaske</div><div class="t" style="left:104.8px;top:71px;font-size:13px;line-height:13px;color:#000;letter-spacing:0.8px;">Optionen für graphischen Druck</div><div class="t" style="left:36.5px;top:101px;font-size:13px;line-height:13px;color:#000;letter-spacing:0.7px;">Bezeichnung</div><div class="t" style="left:153.6px;top:101px;font-size:13px;line-height:13px;color:#000;letter-spacing:0.8px;">Druckertreiber</div><div class="t" style="left:397.0px;top:101px;font-size:13px;line-height:13px;color:#000;letter-spacing:0.0px;">A</div><div class="t" style="left:619.8px;top:101px;font-size:13px;line-height:13px;color:#000;letter-spacing:0.333px;">Jobs PS</div><div class="t" style="left:33.8px;top:123px;font-size:13px;line-height:13px;color:#000;letter-spacing:0.1px;">BLANK-GDI</div><div class="t" style="left:231.0px;top:123px;font-size:13px;line-height:13px;color:#000;letter-spacing:0.636px;">GdiBlank.dtr</div><div class="t" style="left:375.0px;top:123px;font-size:13px;line-height:13px;color:#000;letter-spacing:0.571px;">GDI o. Grafiken</div><div class="t" style="left:644.0px;top:123px;font-size:13px;line-height:13px;color:#000;letter-spacing:0.0px;">0</div><div class="t" style="left:676.6px;top:123px;font-size:13px;line-height:13px;color:#000;letter-spacing:-0.4px;">−1</div><div class="t" style="left:36.4px;top:143px;font-size:13px;line-height:13px;color:#000;letter-spacing:0.671px;">Druckeranschluß</div><div class="t" style="left:33.6px;top:165px;font-size:13px;line-height:13px;color:#000;letter-spacing:0.878px;">GDI:Standarddrucker</div><div class="t" style="left:36.3px;top:185px;font-size:13px;line-height:13px;color:#000;letter-spacing:0.873px;">DVL-Optionen</div><div class="t" style="left:234.8px;top:185px;font-size:13px;line-height:13px;color:#000;letter-spacing:0.986px;">Stationsdrucker</div><div class="t" style="left:608.0px;top:185px;font-size:13px;line-height:13px;color:#000;letter-spacing:0.84px;">Kennz.</div><div class="t" style="left:476.7px;top:206px;font-size:13px;line-height:13px;color:#1c1a8a;letter-spacing:1.0px;">&gt;Optionen</div><div class="t" style="left:607.0px;top:207px;font-size:13px;line-height:13px;color:#000;letter-spacing:0.0px;">O</div><div class="t" style="left:36.4px;top:229px;font-size:13px;line-height:13px;color:#000;letter-spacing:0.72px;">Bemerkungen</div><div class="t" style="left:36.4px;top:282px;font-size:13px;line-height:13px;color:#000;letter-spacing:0.954px;">Drucksteuerung</div><div class="t" style="left:59.5px;top:303px;font-size:13px;line-height:13px;color:#000;letter-spacing:0.861px;">neue obere Randsteuerung</div><div class="t" style="left:59.5px;top:324px;font-size:13px;line-height:13px;color:#000;letter-spacing:0.789px;">Druckanschluß prüfen</div><div class="t" style="left:59.5px;top:345px;font-size:13px;line-height:13px;color:#000;letter-spacing:0.88px;">Druckanschluß nicht prüfen</div><div class="t" style="left:60.5px;top:366px;font-size:13px;line-height:13px;color:#000;letter-spacing:0.784px;">Ausdruck in MS-Win.Spooler</div><div class="t" style="left:476.6px;top:282px;font-size:13px;line-height:13px;color:#000;letter-spacing:0.886px;">Druckart</div><div class="t" style="left:499.5px;top:303px;font-size:13px;line-height:13px;color:#000;letter-spacing:0.44px;">Endlos</div><div class="t" style="left:499.5px;top:324px;font-size:13px;line-height:13px;color:#000;letter-spacing:0.78px;">Einzelblatt</div><div class="t" style="left:499.5px;top:345px;font-size:13px;line-height:13px;color:#000;letter-spacing:0.92px;">Seitenweise</div><div class="t" style="left:476.6px;top:366px;font-size:13px;line-height:13px;color:#000;letter-spacing:0.814px;">Blattrand links</div><div class="t" style="left:676.7px;top:367px;font-size:13px;line-height:13px;color:#000;letter-spacing:0.0px;">0</div><div class="t" style="left:41.8px;top:391px;font-size:10px;line-height:10px;color:#000;-webkit-text-stroke:0.35px #000;letter-spacing:1.04px;">erste Seite</div><div class="t" style="left:36.5px;top:409px;font-size:13px;line-height:13px;color:#000;letter-spacing:0.8px;">Seitenlänge</div><div class="t" style="left:36.5px;top:429px;font-size:13px;line-height:13px;color:#000;letter-spacing:0.985px;">Blattrand oben</div><div class="t" style="left:232.0px;top:409px;font-size:13px;line-height:13px;color:#000;letter-spacing:0.0px;">−52</div><div class="t" style="left:232.0px;top:430px;font-size:13px;line-height:13px;color:#000;letter-spacing:0.0px;">−10</div><div class="t" style="left:59.4px;top:450px;font-size:13px;line-height:13px;color:#000;letter-spacing:0.8px;">keine Umschaltung</div><div class="t" style="left:59.4px;top:471px;font-size:13px;line-height:13px;color:#000;letter-spacing:1.375px;">Schacht 1</div><div class="t" style="left:59.4px;top:492px;font-size:13px;line-height:13px;color:#000;letter-spacing:1.375px;">Schacht 2</div><div class="t" style="left:59.4px;top:513px;font-size:13px;line-height:13px;color:#000;letter-spacing:1.375px;">Schacht 3</div><div class="t" style="left:283.8px;top:391px;font-size:10px;line-height:10px;color:#000;-webkit-text-stroke:0.35px #000;letter-spacing:1.08px;">Folgeseiten</div><div class="t" style="left:278.7px;top:409px;font-size:13px;line-height:13px;color:#000;letter-spacing:0.8px;">Seitenlänge</div><div class="t" style="left:278.7px;top:429px;font-size:13px;line-height:13px;color:#000;letter-spacing:0.985px;">Blattrand oben</div><div class="t" style="left:480.5px;top:409px;font-size:13px;line-height:13px;color:#000;letter-spacing:1.8px;">52</div><div class="t" style="left:473.6px;top:430px;font-size:13px;line-height:13px;color:#000;letter-spacing:0.7px;">−10</div><div class="t" style="left:301.6px;top:450px;font-size:13px;line-height:13px;color:#000;letter-spacing:0.8px;">keine Umschaltung</div><div class="t" style="left:301.6px;top:471px;font-size:13px;line-height:13px;color:#000;letter-spacing:1.375px;">Schacht 1</div><div class="t" style="left:301.6px;top:492px;font-size:13px;line-height:13px;color:#000;letter-spacing:1.375px;">Schacht 2</div><div class="t" style="left:301.6px;top:513px;font-size:13px;line-height:13px;color:#000;letter-spacing:1.375px;">Schacht 3</div><div class="t" style="left:525.9px;top:391px;font-size:10px;line-height:10px;color:#000;-webkit-text-stroke:0.35px #000;letter-spacing:1.025px;">GDI Setup</div><div class="t" style="left:520.5px;top:409px;font-size:13px;line-height:13px;color:#000;letter-spacing:0.9px;">Seitenlänge</div><div class="t" style="left:520.5px;top:429px;font-size:13px;line-height:13px;color:#000;letter-spacing:1.0px;">Hoch/Quer</div><div class="t" style="left:520.5px;top:450px;font-size:13px;line-height:13px;color:#000;letter-spacing:1.2px;">Schachtcode</div><div class="t" style="left:520.5px;top:471px;font-size:13px;line-height:13px;color:#000;letter-spacing:0.914px;">Fachcode</div><div class="t" style="left:520.6px;top:492px;font-size:13px;line-height:13px;color:#1c1a8a;letter-spacing:1.1px;">&gt;Setup aufrufen</div><div class="t" style="left:543.4px;top:513px;font-size:13px;line-height:13px;color:#000;letter-spacing:1.12px;">Setup aktiv</div><div class="t" style="left:676.6px;top:409px;font-size:13px;line-height:13px;color:#000;letter-spacing:0.0px;">0</div><div class="t" style="left:676.6px;top:430px;font-size:13px;line-height:13px;color:#000;letter-spacing:0.0px;">0</div><div class="t" style="left:676.6px;top:451px;font-size:13px;line-height:13px;color:#000;letter-spacing:0.0px;">0</div><div class="t" style="left:676.6px;top:472px;font-size:13px;line-height:13px;color:#000;letter-spacing:0.0px;">0</div><div class="t" style="left:20.6px;top:557px;font-size:13px;line-height:13px;color:#aca899;letter-spacing:0.86px;text-shadow:1px 1px 0 #fff;">Dateianhang</div><div class="t" style="left:424px;top:558px;font-size:12px;line-height:12px;color:#000;letter-spacing:0px;">OK</div><div class="t" style="left:523.8px;top:557px;font-size:13px;line-height:13px;color:#000;letter-spacing:1.0px;">Zurück</div><div class="t" style="left:619.5px;top:557px;font-size:13px;line-height:13px;color:#000;letter-spacing:0.711px;">Übernehmen</div>
</body></html>
